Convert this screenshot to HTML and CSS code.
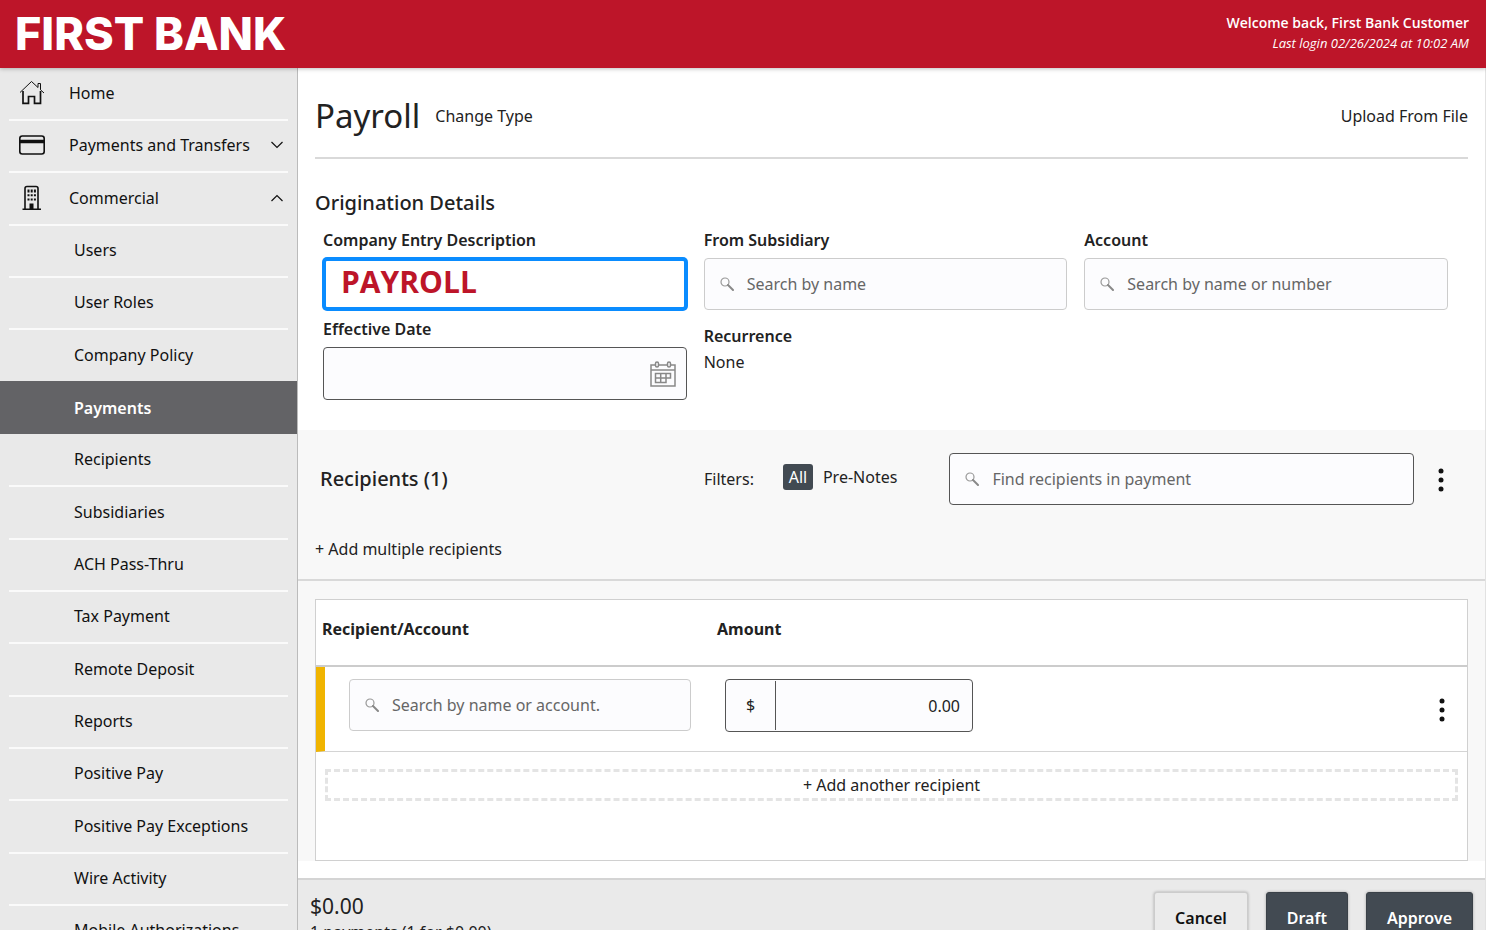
FILE: index.html
```html
<!DOCTYPE html>
<html lang="en">
<head>
  <meta charset="UTF-8">
  <meta name="viewport" content="width=device-width, initial-scale=1.0">
  <title>First Bank - Payroll</title>
  <link rel="stylesheet" href="styles.css">
</head>
<body>
  <svg class="sprite" aria-hidden="true">
    <symbol id="icon-search" viewBox="0 0 14 14">
      <circle cx="5" cy="5" r="4" fill="none" stroke="#999" stroke-width="1.2"/>
      <path d="M8 8l5 5" stroke="#888" stroke-width="2" stroke-linecap="round"/>
    </symbol>
    <symbol id="icon-kebab" viewBox="0 0 6 24">
      <circle cx="3" cy="3" r="2.5"/>
      <circle cx="3" cy="12" r="2.5"/>
      <circle cx="3" cy="21" r="2.5"/>
    </symbol>
  </svg>

  <header class="topbar">
    <div class="logo">FIRST BANK</div>
    <div class="welcome">
      <div class="welcome-name">Welcome back, First Bank Customer</div>
      <div class="welcome-login">Last login 02/26/2024 at 10:02 AM</div>
    </div>
  </header>

  <div class="layout">
    <nav class="sidebar">
      <a class="nav-item" href="#">
        <svg class="nav-icon" viewBox="0 0 26 26" fill="none" stroke="#111">
          <path d="M1 12.5L12.500 1.500L19 7.500V3.500H21.500V9.800L25 13" stroke-width="1"/>
          <path d="M4 11V23.300H9.500V16.500H15.500V23.300H21.500V11" stroke-width="1.700"/>
        </svg>
        <span>Home</span>
      </a>
      <a class="nav-item" href="#">
        <svg class="nav-icon" viewBox="0 0 26 26" fill="none" stroke="#111">
          <rect x="0.800" y="4" width="24.400" height="18" rx="2.500" stroke-width="1.600"/>
          <path d="M1 9.500H25" stroke-width="3.500"/>
        </svg>
        <span>Payments and Transfers</span>
        <svg class="chevron" viewBox="0 0 12 8" fill="none" stroke="#111" stroke-width="1.200"><path d="M0.500 1L6 6.500L11.500 1"/></svg>
      </a>
      <a class="nav-item" href="#">
        <svg class="nav-icon" viewBox="0 0 26 26" fill="#111">
          <path d="M6 24V3.500Q6 1.500 8 1.500H17Q19 1.500 19 3.500V24M3.500 24.300H22" fill="none" stroke="#111" stroke-width="1.600"/>
          <path d="M8.500 4.500h2v3h-2zM11.700 4.500h2v3h-2zM14.900 4.500h2v3h-2zM8.500 9.300h2v2h-2zM11.700 9.300h2v2h-2zM14.900 9.300h2v2h-2zM8.500 13.500h2v2h-2zM11.700 13.500h2v2h-2zM14.900 13.500h2v2h-2zM10.500 18.500h4V24h-4z"/>
        </svg>
        <span>Commercial</span>
        <svg class="chevron" viewBox="0 0 12 8" fill="none" stroke="#111" stroke-width="1.200"><path d="M0.500 7L6 1.500L11.500 7"/></svg>
      </a>
      <a class="nav-item sub" href="#">Users</a>
      <a class="nav-item sub" href="#">User Roles</a>
      <a class="nav-item sub" href="#">Company Policy</a>
      <a class="nav-item sub active" href="#">Payments</a>
      <a class="nav-item sub" href="#">Recipients</a>
      <a class="nav-item sub" href="#">Subsidiaries</a>
      <a class="nav-item sub" href="#">ACH Pass-Thru</a>
      <a class="nav-item sub" href="#">Tax Payment</a>
      <a class="nav-item sub" href="#">Remote Deposit</a>
      <a class="nav-item sub" href="#">Reports</a>
      <a class="nav-item sub" href="#">Positive Pay</a>
      <a class="nav-item sub" href="#">Positive Pay Exceptions</a>
      <a class="nav-item sub" href="#">Wire Activity</a>
      <a class="nav-item sub" href="#">Mobile Authorizations</a>
    </nav>

    <main class="content">
      <div class="page-head">
        <h1>Payroll</h1>
        <a href="#">Change Type</a>
        <a class="upload" href="#">Upload From File</a>
      </div>

      <section class="origination">
        <h2>Origination Details</h2>
        <div class="fields">
          <div class="column">
            <label for="description">Company Entry Description</label>
            <input class="box description" type="text" id="description" value="PAYROLL">
            <label class="date-label" for="date">Effective Date</label>
            <div class="box outlined">
              <input type="text" id="date">
              <svg class="calendar" viewBox="0 0 26 26" fill="none" stroke="#888" stroke-width="1.500">
                <path d="M5 4H1V25H25V4H21M9 4H17M1 9H25"/>
                <rect x="5.500" y="1" width="3" height="5" rx="1.500"/>
                <rect x="17.500" y="1" width="3" height="5" rx="1.500"/>
                <path d="M5.500 12.500H20.500V17H16V21.500H5.500ZM5.500 17H16V12.500M10.700 12.500V21.500"/>
              </svg>
            </div>
          </div>
          <div class="column">
            <label for="subsidiary">From Subsidiary</label>
            <div class="box">
              <svg class="search-icon"><use href="#icon-search"/></svg>
              <input type="text" id="subsidiary" placeholder="Search by name">
            </div>
            <div class="recurrence">Recurrence</div>
            <div>None</div>
          </div>
          <div class="column">
            <label for="account">Account</label>
            <div class="box">
              <svg class="search-icon"><use href="#icon-search"/></svg>
              <input type="text" id="account" placeholder="Search by name or number">
            </div>
          </div>
        </div>
      </section>

      <section class="recipients">
        <div class="recipients-bar">
          <h2>Recipients (1)</h2>
          <span>Filters:</span>
          <div class="filters">
            <button class="filter selected">All</button>
            <button class="filter">Pre-Notes</button>
          </div>
          <div class="box find-box">
            <svg class="search-icon"><use href="#icon-search"/></svg>
            <input type="text" placeholder="Find recipients in payment" aria-label="Find recipients in payment">
          </div>
          <button class="kebab" aria-label="Recipient options"><svg><use href="#icon-kebab"/></svg></button>
        </div>
        <button class="add-multiple">+ Add multiple recipients</button>
      </section>

      <section class="table-area">
        <div class="table-card">
          <table>
            <thead>
              <tr>
                <th class="col-recipient">Recipient/Account</th>
                <th>Amount</th>
                <th class="col-menu"></th>
              </tr>
            </thead>
            <tbody>
              <tr>
                <td class="col-recipient">
                  <div class="box">
                    <svg class="search-icon"><use href="#icon-search"/></svg>
                    <input type="text" placeholder="Search by name or account." aria-label="Search by name or account">
                  </div>
                </td>
                <td>
                  <div class="box outlined amount-box">
                    <span class="currency">$</span>
                    <input type="text" value="0.00" aria-label="Amount">
                  </div>
                </td>
                <td class="col-menu">
                  <button class="kebab" aria-label="Row options"><svg><use href="#icon-kebab"/></svg></button>
                </td>
              </tr>
            </tbody>
          </table>
          <button class="add-another">+ Add another recipient</button>
        </div>
      </section>

      <footer class="summary">
        <div>
          <div class="total">$0.00</div>
          <div>1 payments (1 for $0.00)</div>
        </div>
        <div class="actions">
          <button class="btn cancel">Cancel</button>
          <button class="btn">Draft</button>
          <button class="btn">Approve</button>
        </div>
      </footer>
    </main>
  </div>
</body>
</html>
```
FILE: styles.css
```css
* {
  box-sizing: border-box;
}
body {
  margin: 0;
  height: 100vh;
  overflow: hidden;
  font-family: "Noto Sans", "Open Sans", sans-serif;
  font-size: 16px;
  line-height: 24px;
  color: #222;
  background: #fff;
}
a {
  color: inherit;
  text-decoration: none;
}
button, input {
  font: inherit;
  color: inherit;
}
button {
  background: none;
  border: 0;
  padding: 0;
  cursor: pointer;
}
h1, h2 {
  margin: 0;
}
.sprite {
  display: none;
}

/* top bar */
.topbar {
  position: relative;
  z-index: 1;
  display: flex;
  justify-content: space-between;
  align-items: center;
  height: 68px;
  padding: 0 17px 2px 15px;
  background: #bd1529;
  color: #fff;
  box-shadow: 0 1px 4px rgba(0, 0, 0, 0.25);
}
.logo {
  padding-top: 2px;
  font-family: Inter, sans-serif;
  font-weight: 800;
  font-size: 45px;
  line-height: 44px;
}
.welcome {
  font-family: "Open Sans", sans-serif;
  font-size: 13px;
  line-height: 20px;
  text-align: right;
}
.welcome-name {
  font-size: 14px;
  font-weight: 600;
}
.welcome-login {
  font-style: italic;
}

.layout {
  display: flex;
}

/* sidebar */
.sidebar {
  flex: 0 0 298px;
  display: grid;
  grid-auto-rows: 52px 52px 53px;
  padding-top: 1px;
  background: #e9e9e9;
  border-right: 1px solid #bbb;
  color: #111;
}
.nav-item {
  display: flex;
  align-items: center;
  margin: 0 9px;
  padding: 0 5px 2px 10px;
  border-bottom: 2px solid #fafafa;
}
.nav-icon {
  width: 26px;
  height: 26px;
  margin-right: 24px;
}
.chevron {
  width: 12px;
  height: 8px;
  margin-left: auto;
}
.nav-item.sub {
  padding-left: 65px;
}
.nav-item.active {
  margin: -2px 0 1px;
  padding: 0 0 0 74px;
  border: 0;
  background: #636366;
  color: #fff;
  font-weight: 600;
}

/* page */
.content {
  flex: 1;
  min-width: 0;
  border-right: 1px solid #e2e2e2;
}
.page-head {
  display: flex;
  align-items: center;
  margin: 0 17px;
  padding: 26px 0 19px;
  border-bottom: 2px solid #d9d9d9;
}
h1 {
  margin-right: 15px;
  font-size: 33px;
  font-weight: 400;
  line-height: 44px;
}
.upload {
  margin-left: auto;
}
h2 {
  font-size: 20px;
  font-weight: 500;
  line-height: 28px;
}
.origination {
  padding: 30px 37px 30px 17px;
}
.fields {
  display: grid;
  grid-template-columns: repeat(3, 1fr);
  gap: 17px;
  margin: 11px 0 0 8px;
}
label, .recurrence {
  display: block;
  margin-bottom: 6px;
  font-weight: 600;
  color: #222;
}
.date-label {
  margin-top: 7px;
}
.recurrence {
  margin: 14px 0 2px;
}
.box {
  display: flex;
  align-items: center;
  width: 100%;
  height: 52px;
  border: 1px solid #ccc;
  border-radius: 4px;
  background: #fcfcfe;
}
.box input {
  flex: 1;
  min-width: 0;
  height: 100%;
  padding: 0 12px 0 13px;
  border: 0;
  outline: 0;
  background: none;
}
.box input::placeholder {
  color: #666;
  opacity: 1;
}
.search-icon {
  width: 14px;
  height: 14px;
  margin-left: 15px;
}
.outlined {
  height: 53px;
  border-color: #555;
}
.description {
  padding: 0 16px 5px 15px;
  border: 3px solid #0a8cff;
  box-shadow: 0 0 0 1px #0a8cff;
  outline: 0;
  background: #fff;
  font-family: "Open Sans", sans-serif;
  font-size: 30px;
  font-weight: 700;
  color: #bd1529;
}
.calendar {
  width: 26px;
  height: 26px;
  margin-right: 10px;
}

/* recipients */
.recipients {
  padding: 23px 17px 18px;
  background: #f8f8f8;
  border-bottom: 2px solid #d9d9d9;
}
.recipients-bar {
  display: flex;
  align-items: center;
  margin-bottom: 32px;
}
.recipients-bar h2 {
  width: 389px;
  padding-left: 5px;
}
.filters {
  display: flex;
  align-items: center;
  padding-bottom: 4px;
  margin: 0 52px 0 29px;
}
.filter {
  line-height: 26px;
}
.filter.selected {
  width: 30px;
  margin-right: 10px;
  border-radius: 3px;
  background: #424a52;
  color: #fff;
}
.find-box {
  flex: 1;
  border-color: #555;
}
.kebab {
  display: flex;
  justify-content: center;
  width: 54px;
  padding-top: 2px;
}
.kebab svg {
  width: 6px;
  height: 24px;
  fill: #111;
}

/* recipient table */
.table-area {
  padding: 18px 17px 0;
  background: #f8f8f8;
}
.table-card {
  border: 1px solid #d0d0d0;
  background: #fff;
}
table {
  width: 100%;
  table-layout: fixed;
  border-spacing: 0;
}
th {
  height: 67px;
  padding: 0 8px 8px;
  border-bottom: 2px solid #ccc;
  text-align: left;
  font-weight: 700;
}
th.col-recipient {
  width: 393px;
  padding-left: 6px;
}
td {
  height: 85px;
  padding: 12px 16px 19px;
  border-bottom: 1px solid #d4d4d4;
  vertical-align: top;
}
td.col-recipient {
  padding: 12px 18px 19px 24px;
  border-left: 9px solid #f0b400;
}
.col-menu {
  width: 52px;
}
td.col-menu {
  padding: 0;
  vertical-align: middle;
}
.amount-box {
  width: 248px;
}
.currency {
  width: 50px;
  line-height: 49px;
  border-right: 1px solid #555;
  text-align: center;
}
.amount-box input {
  text-align: right;
}
.add-another {
  display: block;
  width: calc(100% - 18px);
  height: 32px;
  margin: 17px 9px 59px;
  border: 3px dashed #e4e4e4;
}

/* bottom bar */
.summary {
  display: flex;
  justify-content: space-between;
  align-items: flex-start;
  margin-top: 17px;
  padding: 12px;
  background: #eaeaea;
  border-top: 2px solid #d4d4d4;
}
.total {
  font-size: 21px;
  line-height: 28px;
}
.actions {
  display: flex;
  gap: 18px;
}
.btn {
  height: 51px;
  padding: 0 20px;
  border: 1px solid #3a4148;
  border-radius: 3px;
  background: #424a52;
  color: #fff;
  font-weight: 600;
  box-shadow: 0 0 3px rgba(0, 0, 0, 0.3);
}
.btn.cancel {
  background: #ebebeb;
  border-color: #ccc;
  color: #111;
}
```
